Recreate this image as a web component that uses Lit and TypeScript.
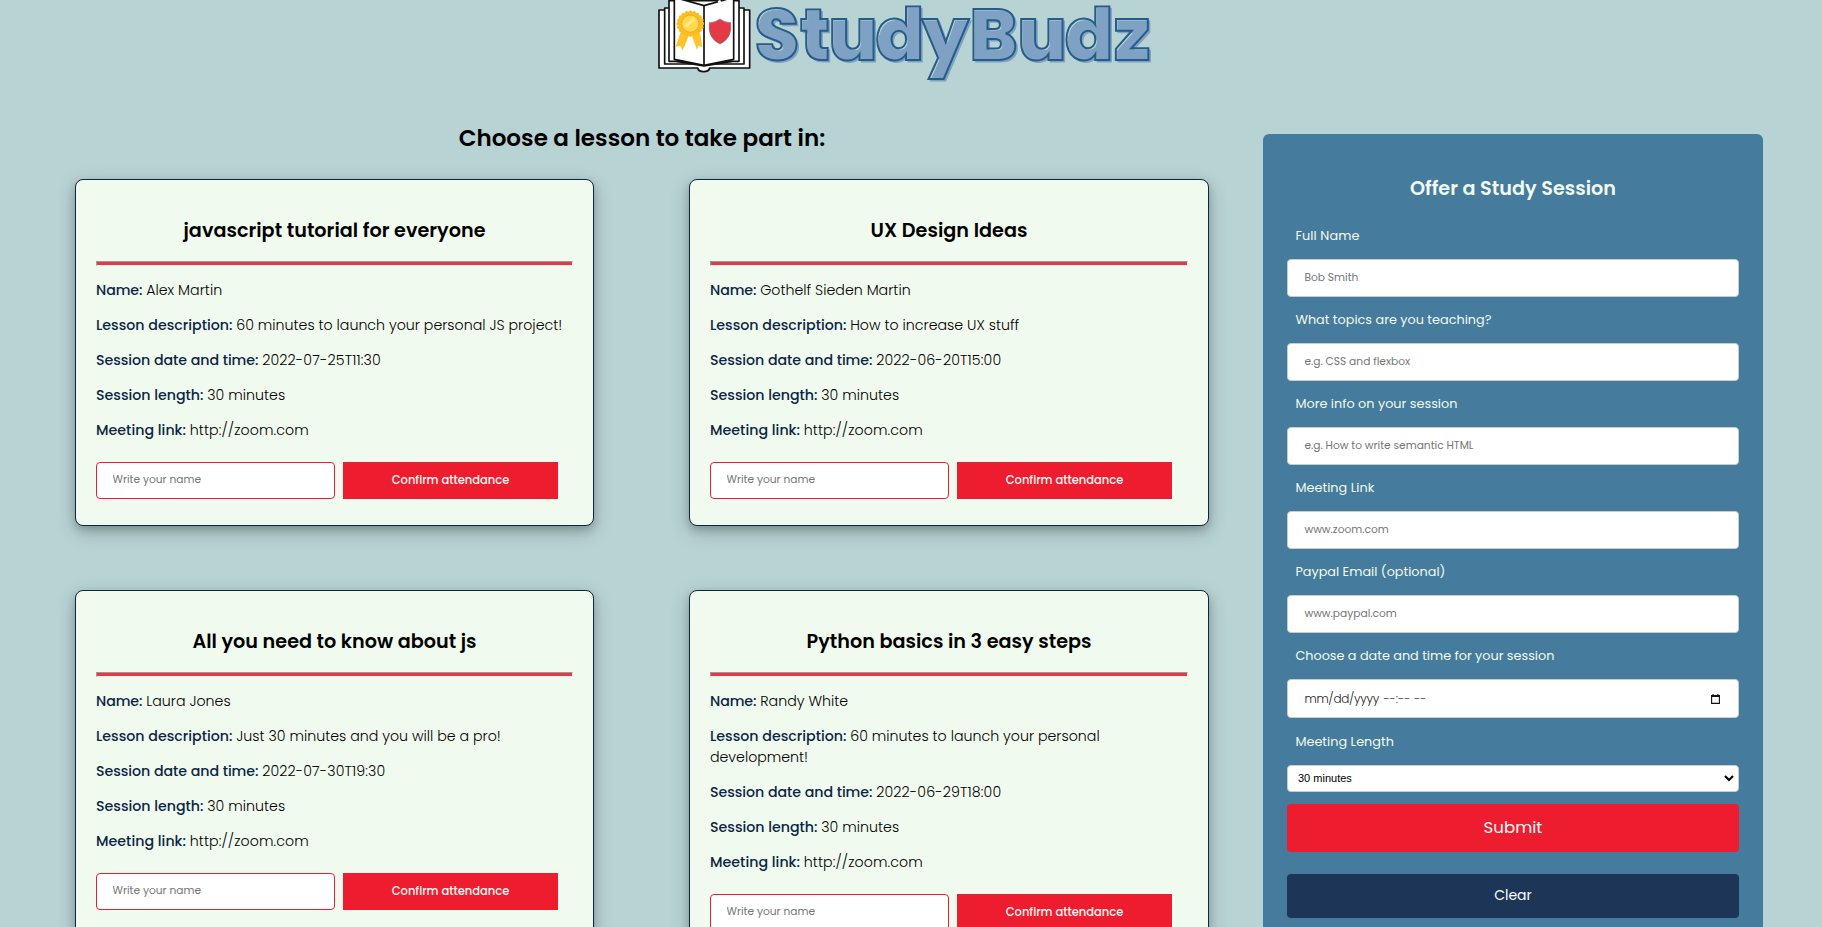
import { LitElement, html, css, svg } from "lit";
import { customElement, property } from "lit/decorators.js";

const FONT = css`Poppins, Inter, "Open Sans", sans-serif`;

/** A single line of text tracked so that it fills a set measure. */
@customElement("fit-text")
class FitText extends LitElement {
  @property({ type: Number }) measure = 0;

  static styles = css`
    :host { display: inline-block; white-space: nowrap; }
  `;

  render() {
    return html`<slot></slot>`;
  }

  firstUpdated() {
    const count = (this.textContent ?? "").trim().length;
    const natural = this.getBoundingClientRect().width;
    if (this.measure && count > 1) {
      this.style.letterSpacing = `${(this.measure - natural) / (count - 1)}px`;
      this.style.marginRight = `${(natural - this.measure) / (count - 1)}px`;
    }
  }
}

type Line = [string, number];
interface Lesson {
  title: Line;
  name: Line;
  description: Line[];
  date: Line;
}

const lessons: Lesson[] = [
  {
    title: ["javascript tutorial for everyone", 302],
    name: ["Alex Martin", 76],
    description: [["60 minutes to launch your personal JS project!", 326]],
    date: ["2022-07-25T11:30", 118.5],
  },
  {
    title: ["UX Design Ideas", 157],
    name: ["Gothelf Sieden Martin", 150.5],
    description: [["How to increase UX stuff", 169]],
    date: ["2022-06-20T15:00", 125],
  },
  {
    title: ["All you need to know about js", 284],
    name: ["Laura Jones", 84.5],
    description: [["Just 30 minutes and you will be a pro!", 264.5]],
    date: ["2022-07-30T19:30", 123],
  },
  {
    title: ["Python basics in 3 easy steps", 285],
    name: ["Randy White", 88],
    description: [["60 minutes to launch your personal", 249.5], ["development!", 98]],
    date: ["2022-06-29T18:00", 125],
  },
];

const fit = ([text, measure]: Line) => html`<fit-text .measure=${measure}>${text}</fit-text>`;

@customElement("lesson-card")
class LessonCard extends LitElement {
  @property({ attribute: false }) lesson!: Lesson;

  static styles = css`
    :host {
      display: block; box-sizing: border-box; padding: 0 20px 26px;
      font-family: ${FONT};
      background: #f1faee; border: 1px solid #0b2740; border-radius: 8px;
      box-shadow: 0 4px 8px 0 rgba(0, 0, 0, 0.2), 0 6px 20px 0 rgba(0, 0, 0, 0.19);
    }
    h3 { margin: 36px 0 0; font-size: 19.2px; line-height: 30px; font-weight: 600; text-align: center; color: #000; }
    hr {
      height: 3px; margin: 15px 0 14px; background: #e63946;
      border: 1px solid; border-color: #9a9a9a #eee #eee #9a9a9a;
    }
    p { margin: 0 0 14.1px; font-size: 14.2px; line-height: 21px; font-weight: 300; color: #000; }
    b { font-weight: 500; color: #0b2545; margin-right: 3.7px; }
    .join { display: flex; gap: 8px; margin-top: 20.5px; }
    input {
      box-sizing: border-box; width: 239px; height: 37px; padding: 0 16px 0 15.6px;
      font-family: inherit; font-size: 10.66px; font-weight: 400;
      border: 1px solid #ed1d2f; border-radius: 4px; background: #fff; outline: none;
    }
    input::placeholder { color: #757575; }
    button {
      width: 215px; height: 37px; padding: 0; border: 0; background: #ed1d2f; color: #f8f8f4;
      font-family: inherit; font-size: 11.5px; font-weight: 500;
    }
  `;

  render() {
    const l = this.lesson;
    return html`
      <h3>${fit(l.title)}</h3>
      <hr />
      <p><b>${fit(["Name:", 46.5])}</b>${fit(l.name)}</p>
      <p><b>${fit(["Lesson description:", 136.5])}</b>${l.description.map((d, i) => html`${i ? html`<br />` : ""}${fit(d)}`)}</p>
      <p><b>${fit(["Session date and time:", 162.5])}</b>${fit(l.date)}</p>
      <p><b>${fit(["Session length:", 107.5])}</b>${fit(["30 minutes", 78])}</p>
      <p><b>${fit(["Meeting link:", 90])}</b>${fit(["http://zoom.com", 119])}</p>
      <div class="join">
        <input placeholder="Write your name" />
        <button>${fit(["Confirm attendance", 117.5])}</button>
      </div>
    `;
  }
}

const fields: { label: Line; hint: string }[] = [
  { label: ["Full Name", 64], hint: "Bob Smith" },
  { label: ["What topics are you teaching?", 196], hint: "e.g. CSS and flexbox" },
  { label: ["More info on your session", 162], hint: "e.g. How to write semantic HTML" },
  { label: ["Meeting Link", 79], hint: "www.zoom.com" },
  { label: ["Paypal Email (optional)", 150], hint: "www.paypal.com" },
];

@customElement("session-form")
class SessionForm extends LitElement {
  static styles = css`
    :host {
      display: block; box-sizing: border-box; width: 500px; height: 830px; padding: 0 24px;
      background: #457b9d; color: #f1faee; border-radius: 6px;
      font-family: ${FONT};
    }
    h2 { margin: 0; padding: 40px 0 22px; font-size: 19.2px; line-height: 30px; font-weight: 600; text-align: center; }
    label, .field { display: block; box-sizing: border-box; }
    label { height: 33px; padding-left: 8.4px; font-size: 12.8px; line-height: 20px; }
    .field {
      width: 100%; height: 38px; padding: 0 16.4px; color: #222;
      font-family: inherit; font-size: 10.66px; font-weight: 400;
      border: 1px solid #ccc; border-radius: 4px; background: #fff; outline: none;
    }
    .field::placeholder { color: #757575; }
    .row { height: 84.1px; }
    .when { height: 85.1px; }
    .date { display: flex; align-items: center; height: 39px; font-size: 12px; font-weight: 300; }
    .date .rest { margin-left: 4px; color: #444; }
    .date svg { margin-left: auto; margin-right: 2px; }
    .length label { height: 33.4px; }
    .select {
      display: flex; align-items: center; justify-content: space-between; height: 27px; padding: 0 4px 0 10px;
      margin-bottom: 12px; color: #000; font: 400 11px "Liberation Sans", sans-serif;
    }
    button {
      display: block; width: 100%; padding: 0; border: 0; border-radius: 4px; color: #fdfdfb;
      font-family: inherit; font-weight: 400;
    }
    .submit { height: 48px; margin-bottom: 22px; background: #ed1d2f; font-size: 16.6px; }
    .clear { height: 44px; background: #1d3557; font-size: 14px; }
  `;

  render() {
    return html`
      <h2>${fit(["Offer a Study Session", 206])}</h2>
      ${fields.map(
        (f) => html`<div class="row">
          <label>${fit(f.label)}</label>
          <input class="field" placeholder=${f.hint} />
        </div>`,
      )}
      <div class="when">
        <label>${fit(["Choose a date and time for your session", 259])}</label>
        <div class="field date">
          ${fit(["mm/dd/yyyy", 75])}<span class="rest">${fit(["--:-- --", 43])}</span>
          <svg width="9" height="10" viewBox="0 0 9 10">
            <path d="M.6 1.5h7.8v7.9H.6z" fill="none" stroke="#111" stroke-width="1.1" />
            <path d="M0 1h9v2H0zM1.5 0h1.2v1.5H1.5zM6.3 0h1.2v1.5H6.3z" fill="#111" />
          </svg>
        </div>
      </div>
      <div class="length">
        <label>${fit(["Meeting Length", 98.5])}</label>
        <div class="field select">
          <span>30 minutes</span>
          <svg width="10" height="7" viewBox="0 0 10 7"><path d="M1 1l4 4 4-4" fill="none" stroke="#000" stroke-width="2.1" /></svg>
        </div>
      </div>
      <button class="submit">Submit</button>
      <button class="clear">Clear</button>
    `;
  }
}

const petals = Array.from({ length: 20 }, (_, i) => {
  const a = (i * Math.PI) / 10;
  return svg`<circle cx=${151 + 36 * Math.cos(a)} cy=${71 + 34 * Math.sin(a)} r="5.5" />`;
});

const book = svg`
  <g transform="scale(.33333)" stroke-linejoin="round">
    <path d="M57 30h272v174H209q-2 11-18 11t-18-11H57z" fill="#fff" stroke="#111" stroke-width="5" />
    <path d="M74 24h238v168H74z" fill="#fff" stroke="#111" stroke-width="5" />
    <path d="M87 2h210v182H87z" fill="#fff" stroke="#111" stroke-width="5" />
    <path d="M103-8L192 17 281-8V178L192 196 103 178z" fill="#fff" stroke="#111" stroke-width="5" />
    <path d="M192 17V196M110 184L192 198 276 184" fill="none" stroke="#111" stroke-width="5" />
    <path d="M234 6l8-3" stroke="#fff" stroke-width="7" />
    <path d="M122 96l24 12-18 44-7-14-14 2zM180 96l-24 12 15 42 4-13 12 5z" fill="#fdc52b" />
    <g fill="#fbbd22">${petals}</g>
    <circle cx="151" cy="71" r="36" fill="#fbbd22" />
    <circle cx="151" cy="71" r="26" fill="#ffd94f" stroke="#f1a91c" stroke-width="3" />
    <path d="M136 80l27-23" stroke="#ffe98a" stroke-width="9" />
    <path d="M240 57q-14 11-32 11-6 46 32 64 38-18 32-64-18 0-32-11z" fill="#e63946" stroke="#64788a" stroke-width="2" />
  </g>`;

const LETTER_X = "114.8 160 188.5 235.5 282 329.5 377.5 424.8 474";

@customElement("app-root")
class AppRoot extends LitElement {
  static styles = css`
    :host {
      display: block; box-sizing: border-box; height: 927px; overflow: hidden; background: #b8d3d4;
      font-family: ${FONT};
    }
    header { display: flex; height: 90px; padding-left: 640px; }
    header svg { display: block; flex: none; }
    .word { font-size: 71.5px; font-weight: 800; }
    .face { fill: #7fa2c4; stroke: #7fa2c4; stroke-width: 1px; }
    .outline { fill: none; stroke: #265c88; stroke-width: 2px; }
    main { display: grid; grid-template-columns: 1134px 500px; column-gap: 54px; padding-left: 75px; }
    h1 { margin: 0; padding: 30px 0 23px; font-size: 23.04px; line-height: 36px; font-weight: 600; text-align: center; color: #000; }
    .cards { display: grid; grid-template-columns: 519px 520px; column-gap: 95px; row-gap: 64px; align-items: start; }
    .cards > * { min-height: 347px; }
    session-form { margin-top: 44px; }
  `;

  render() {
    return html`
      <header>
        <svg width="540" height="90" viewBox="0 0 540 90">
          ${book}
          <text class="word face" x=${LETTER_X} y="59.5" transform="translate(2 2)">StudyBudz</text>
          <text class="word outline" x=${LETTER_X} y="59.5">StudyBudz</text>
        </svg>
      </header>
      <main>
        <section>
          <h1>${fit(["Choose a lesson to take part in:", 366.5])}</h1>
          <div class="cards">${lessons.map((l) => html`<lesson-card .lesson=${l}></lesson-card>`)}</div>
        </section>
        <session-form></session-form>
      </main>
    `;
  }
}
